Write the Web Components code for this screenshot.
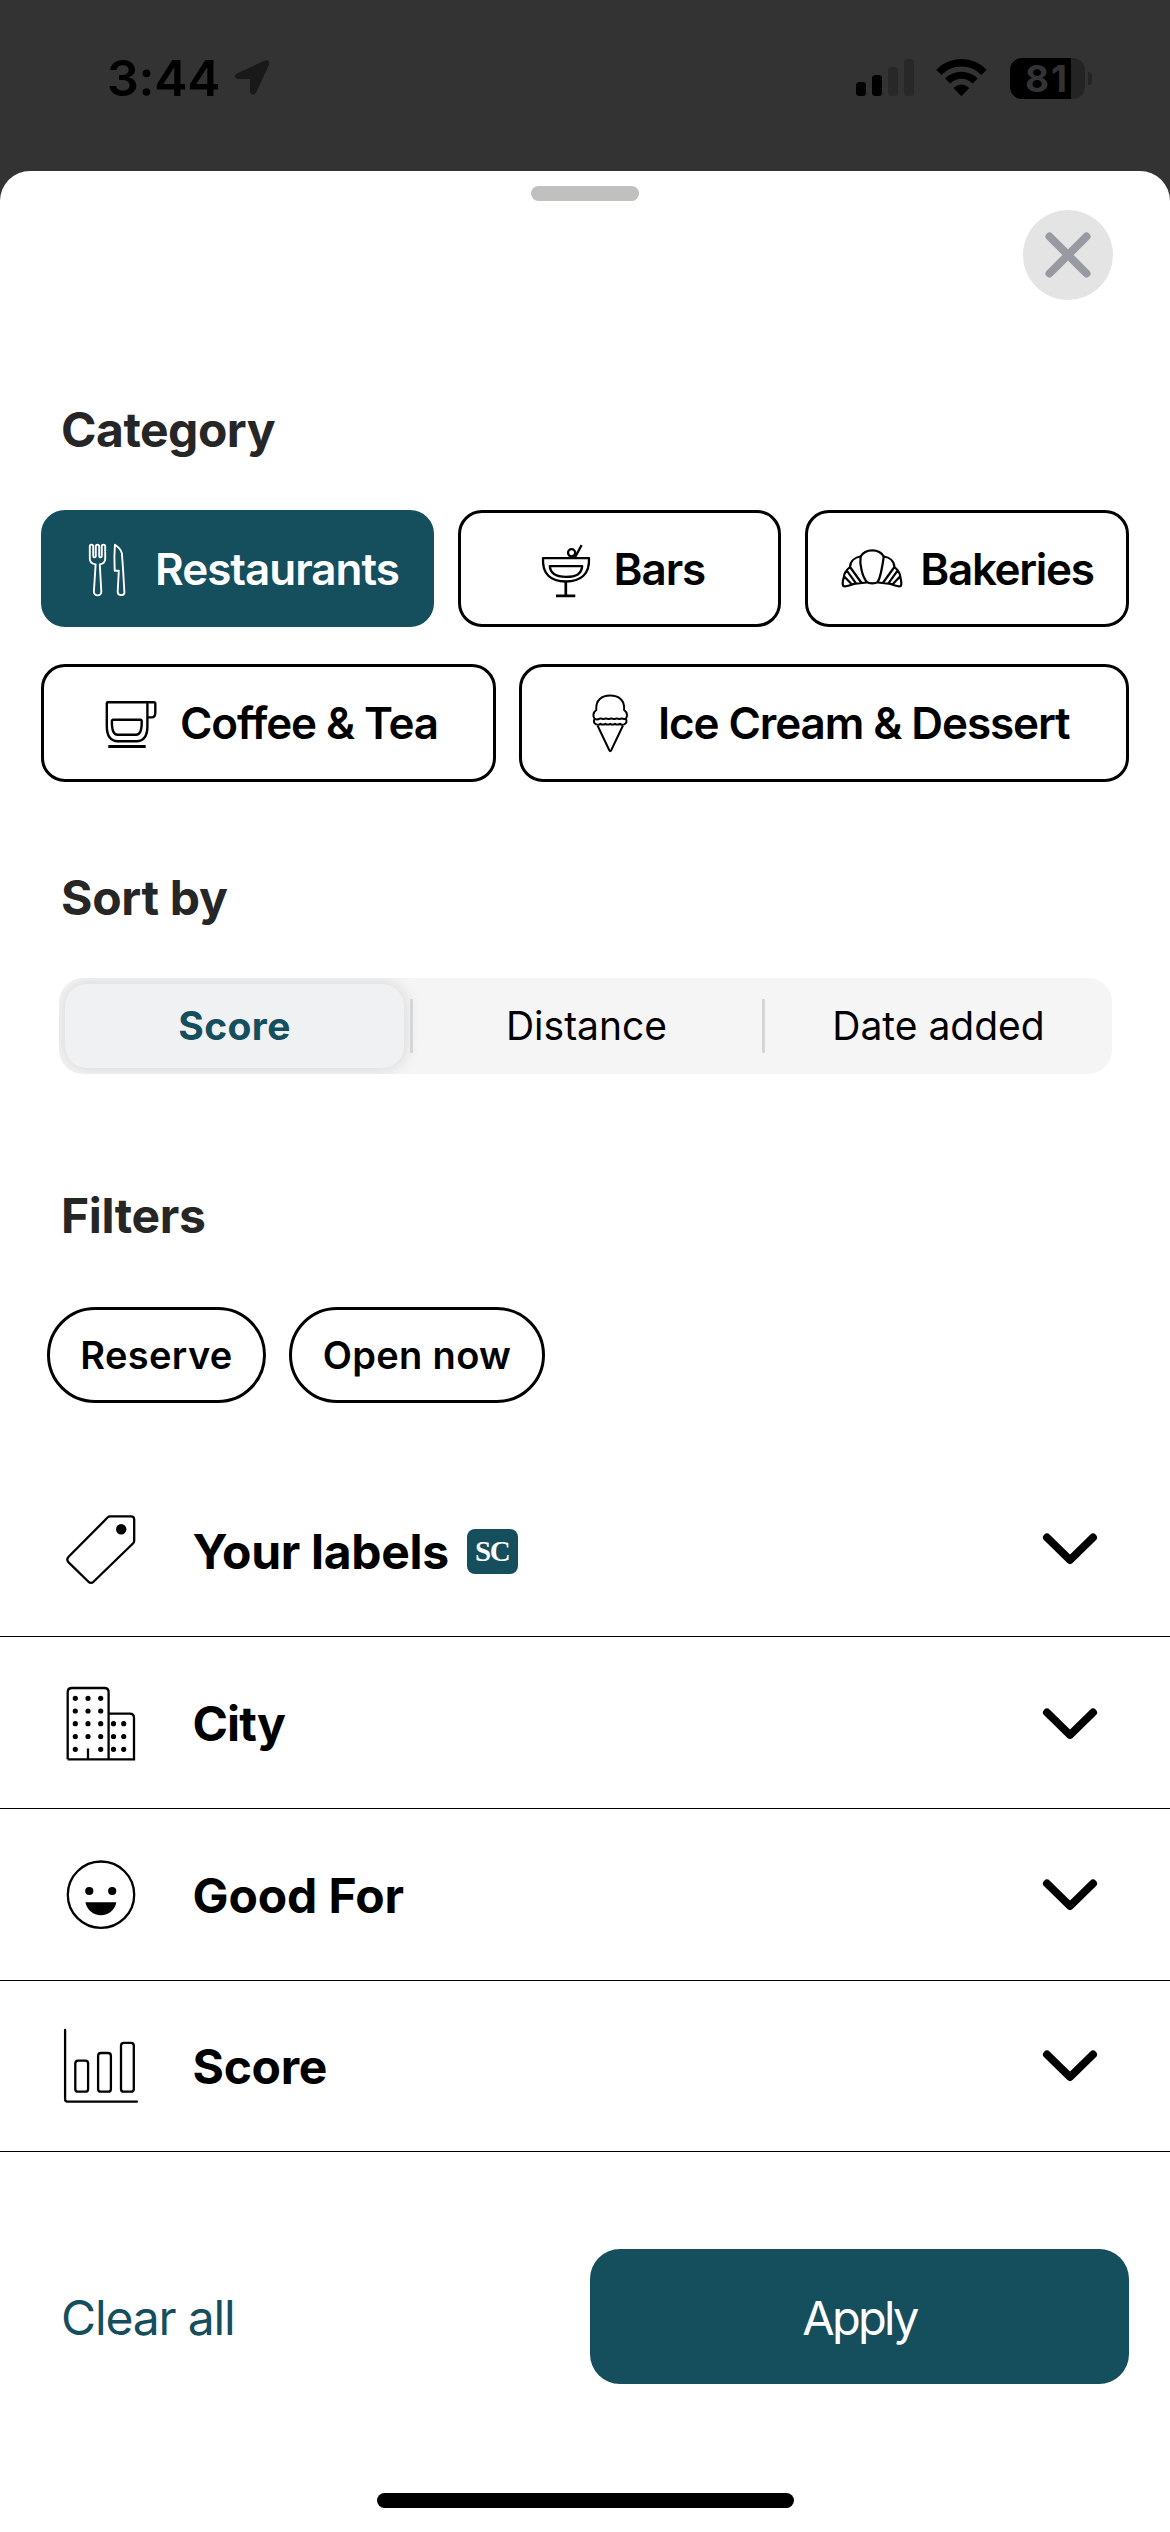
<!DOCTYPE html>
<html lang="en">
<head>
<meta charset="utf-8">
<title>Filters</title>
<style>
html,body{margin:0;padding:0;background:#333}
body{width:1170px;height:2532px;overflow:hidden;font-family:Inter,"Liberation Sans",sans-serif;color:#000}
</style>
</head>
<body>
<filter-screen></filter-screen>
<script>
const define = (name, html) => {
  const tpl = document.createElement('template');
  tpl.innerHTML = html;
  customElements.define(name, class extends HTMLElement {
    constructor() {
      super();
      this.attachShadow({ mode: 'open' }).append(tpl.content.cloneNode(true));
    }
  });
};

define('status-bar', `
<style>
:host{display:flex;height:171px;box-sizing:border-box;padding:48px 78px 0 107px;justify-content:space-between;align-items:flex-start}
.side{display:flex;align-items:center;height:60px}
.time{font-size:50px;font-weight:600;line-height:60px;letter-spacing:-.3px;margin-right:14px}
svg{display:block}
.battery{display:flex;align-items:center;margin-left:23px}
.cell{width:75px;height:41px;border-radius:12px;background:linear-gradient(90deg,#000 61px,#242424 61px);color:#333;font-size:37px;line-height:41px;font-weight:700;letter-spacing:2px;box-sizing:border-box;padding-left:15px}
.tip{width:4px;height:13px;margin-left:3px;border-radius:0 5px 5px 0;background:#242424}
</style>
<div class="side">
  <span class="time">3:44</span>
  <svg width="36" height="38" viewBox="234 60 36 38"><path d="M237 74.6 L264.8 61.5 Q270.6 60 269 65.8 L256.6 92.5 Q255 95.8 252.4 95.4 Q250 95 250 92 V80 H238 Q235.2 79.8 234.8 77.6 Q234.8 75.6 237 74.6Z" fill="#191919"/></svg>
</div>
<div class="side">
  <svg width="131" height="40" viewBox="856 58 131 40">
    <rect x="856" y="82" width="10" height="14" rx="3.5"/><rect x="872" y="75" width="10" height="21" rx="3.5"/>
    <rect x="888" y="67" width="10" height="29" rx="3.5" fill="#282828"/><rect x="904" y="59" width="10" height="37" rx="3.5" fill="#282828"/>
    <path d="M961.4 96.2 L954.2 88.8 Q953.4 88 954.4 87.2 Q961.4 81.6 968.4 87.2 Q969.4 88 968.6 88.8Z"/>
    <g fill="none" stroke="#000"><path d="M938.8 72.3 C951.5 59.6 971.5 59.6 984 72.3" stroke-width="7.4"/><path d="M947.6 81 C955.4 73.3 967.4 73.3 975.2 81" stroke-width="7.2"/></g>
  </svg>
  <div class="battery"><div class="cell">81</div><div class="tip"></div></div>
</div>`);

define('sheet-header', `
<style>
:host{display:flex;flex-direction:column;height:229px}
.handle{width:108px;height:15px;border-radius:8px;background:#c0c0be;align-self:center;margin-top:15px}
.close{width:90px;height:90px;border-radius:50%;background:#e4e4e4;align-self:flex-end;margin:9px 57px 0 0}
svg{display:block}
</style>
<div class="handle"></div>
<div class="close"><svg width="90" height="90" viewBox="0 0 90 90"><path d="M26.5 26.5 63.5 63.5M63.5 26.5 26.5 63.5" stroke="#989aa2" stroke-width="8" stroke-linecap="round"/></svg></div>`);

define('section-title', `
<style>:host{display:block;height:60px;line-height:60px;padding-left:61px;font-size:48px;font-weight:700;color:#262626;letter-spacing:var(--track,-.5px)}</style><slot></slot>`);

define('category-chip', `
<style>
:host{display:flex;align-items:center;box-sizing:border-box;height:118px;border:3px solid #000;border-radius:24px;font-size:44px;font-weight:600;gap:16px;letter-spacing:-1.1px;white-space:nowrap}
:host([selected]){background:#154e5c;border-color:#154e5c;color:#fff;letter-spacing:-1px}
::slotted(svg){display:block;flex:none}
</style>
<slot name="icon"></slot><span><slot></slot></span>`);

define('segment-item', `
<style>
:host{display:flex;align-items:center;justify-content:center;box-sizing:border-box;font-size:39px;line-height:48px}
:host([selected]){background:#eff1f3;color:#154e5c;font-weight:700;letter-spacing:.4px;border-radius:22px;box-shadow:0 0 18px rgba(0,0,0,.14)}
</style><slot></slot>`);

define('segment-control', `
<style>
:host{display:grid;grid-template-columns:339px 13px 339px 13px 339px;height:96px;box-sizing:border-box;padding:6px;margin:0 58px 0 59px;border-radius:24px;background:#f5f5f5;overflow:hidden}
i{width:3px;height:54px;background:#d6d6d6;align-self:center;margin-left:6px}
</style>
<slot name="a"></slot><i></i><slot name="b"></slot><i></i><slot name="c"></slot>`);

define('filter-pill', `
<style>:host{display:flex;align-items:center;justify-content:center;box-sizing:border-box;height:96px;border:3px solid #000;border-radius:48px;font-size:38px;font-weight:600;letter-spacing:.35px}</style><slot></slot>`);

define('accordion-row', `
<style>
:host{display:flex;align-items:center;box-sizing:border-box;height:172px;border-bottom:1px solid #000;padding:0 68px 0 60px}
::slotted(svg){display:block;flex:none}
.label{display:flex;align-items:center;font-size:48px;line-height:60px;font-weight:700;letter-spacing:var(--track,-.3px);margin-left:52.5px;padding-top:2px}
.chev{margin:var(--chev,0) 0 0 auto}
</style>
<slot name="icon"></slot><span class="label"><slot></slot><slot name="badge"></slot></span>
<svg class="chev" width="64" height="40" viewBox="0 0 64 40"><path d="M9 8.5 32 31 55 8.5" fill="none" stroke="#000" stroke-width="8" stroke-linecap="round" stroke-linejoin="round"/></svg>`);

define('sc-badge', `
<style>:host{display:block;box-sizing:border-box;width:51px;height:45px;border-radius:8px;background:#154e5c;color:#fff;font:700 29px/45px "Liberation Serif",serif;padding-left:8px;letter-spacing:-1.2px;margin:-1px 0 0 18px}</style><slot></slot>`);

define('sheet-footer', `
<style>
:host{display:flex;flex-direction:column;align-items:center}
.actions{display:flex;align-items:center;justify-content:space-between;box-sizing:border-box;width:100%;padding:97px 41px 0 61px;font-size:48px}
.clear{color:#154e5c;letter-spacing:-1.15px;padding-top:2px}
.apply{width:539px;height:135px;line-height:138px;border-radius:30px;background:#154e5c;color:#fff;text-align:center;font-size:47px;letter-spacing:-2.7px}
.home{width:417px;height:15px;border-radius:8px;background:#000;margin-top:109px}
</style>
<div class="actions"><span class="clear">Clear all</span><div class="apply">Apply</div></div>
<div class="home"></div>`);

define('filter-screen', `
<style>
:host{display:block}
.sheet{display:flex;flex-direction:column;height:2361px;background:#fff;border-radius:30px 30px 0 0}
.row{display:flex;padding:0 41px}
.cats{margin-top:50px;gap:24px}
.cats category-chip{height:117px}
.cats2{margin-top:37px;gap:23px}
.rest{width:393px;padding-left:31px}.bars{width:324px;padding-left:73px}.bake{width:324px;padding-left:32px;letter-spacing:-1.35px}
.coffee{width:455px;padding-left:56px}.ice{width:610px;padding-left:56px}
.sort{margin-top:86px;--track:-.3px}.seg{margin-top:50px}
.filt{margin-top:112px;--track:-.35px}
.pills{margin:61px 0 62px;padding-left:47px;gap:23px}
.res{width:219px}.open{width:256px}
.labels{--chev:-3px}.city{--track:-.9px;--chev:2px}.good{--track:-.1px;--chev:0px}.score{height:171px;--chev:-1px}
</style>
<status-bar></status-bar>
<div class="sheet">
  <sheet-header></sheet-header>
  <section-title>Category</section-title>
  <div class="row cats">
    <category-chip class="rest" selected>
      <svg slot="icon" width="64" height="64" viewBox="75 536.5 64 64" fill="none" stroke="#fff" stroke-width="1.9" stroke-linejoin="round"><path d="M89.8 558.5V545.8a1.7 1.7 0 0 1 3.4 0V555.6a1.3 1.3 0 0 0 2.6 0V545.8a1.7 1.7 0 0 1 3.4 0V555.6a1.3 1.3 0 0 0 2.6 0V545.8a1.7 1.7 0 0 1 3.4 0V558.5q-.2 4.5-5.4 5.4L101.3 591.2a3.7 3.7 0 0 1-7.4 0L95.6 563.9q-5.6-1-5.8-5.4Z"/><path d="M114.9 544.2Q120.4 547.6 121.8 552.5 122.9 564 124.4 592.4 124.3 594.6 121 594.6 117.8 594.4 117.7 591.5L118.8 570.3H114.7Q114 556.5 114.9 544.2Z"/></svg>Restaurants</category-chip>
    <category-chip class="bars">
      <svg slot="icon" width="64" height="64" viewBox="533 536.5 64 64" fill="none" stroke="#000" stroke-width="2.3" stroke-linejoin="round"><path d="M542 557.7H588C588.8 573.5 580 581 564.8 581 549.5 581 541.2 573.5 542 557.7Z"/><path d="M548.8 565.7H581.2C580.5 573.5 575.5 576.3 564.8 576.3 554 576.3 549.3 573 548.8 565.7Z"/><path d="M564.8 581V595M555 595.3H574.3" stroke-width="2.7"/><circle cx="570.6" cy="552.3" r="3.6"/><path d="M580.6 544.6 573.8 557.3"/></svg>Bars</category-chip>
    <category-chip class="bake">
      <svg slot="icon" width="64" height="64" viewBox="840 536.5 64 64" fill="none" stroke="#000" stroke-width="2.2" stroke-linejoin="round" stroke-linecap="round"><path d="M860.6 556C863 551.8 867.5 549.8 872.2 549.8 877 549.8 881.5 551.8 883.8 556"/><path d="M860.6 556C859.6 563 861.8 575.5 866.6 581.2Q868.3 582.8 872.2 582.8 876.1 582.8 877.8 581.2C880.5 577 882.8 563 883.8 556"/><path d="M860.6 556C855 556.8 850.3 560.5 850 566.5 845.8 570 844 573.5 843.9 576.5 842.6 580.5 842.3 584 843.3 585.5 846 587 850 584.3 855.5 583.2L866.6 582M850 566.5 861.2 582M847 570.3 856 582.8M844.2 576 851.5 583.5"/><path d="M883.8 556C889.4 556.8 894.1 560.5 894.4 566.5 898.6 570 900.2 573.5 900.3 576.5 901.3 580.5 901.8 584 900.8 585.5 898.2 587 894.4 584.3 888.9 583.2L877.8 582M894.4 566.5 883.2 582M897.4 570.3 888.4 582.8M900 576 892.9 583.5"/></svg>Bakeries</category-chip>
  </div>
  <div class="row cats2">
    <category-chip class="coffee">
      <svg slot="icon" width="64" height="64" viewBox="100 691 64 64" fill="none" stroke="#000" stroke-width="2.4" stroke-linejoin="round"><path d="M106.8 703.2Q106.8 702.2 107.8 702.2H153.8Q155.3 702.2 155.3 703.7V712.6Q155.3 717.4 152 717.4H147.7M147.4 702.2V726C147.4 735.5 144 741.2 136.5 741.2H118C110.5 741.2 106.8 735.5 106.8 726V703.2"/><path d="M113.2 719.8H140.4Q141.8 719.8 141.7 721.3 142 734.8 136 734.8H117.6Q111.7 734.8 111.9 721.3 111.8 719.8 113.2 719.8Z"/><path d="M108.3 746.5H145.7" stroke-width="2.8"/></svg>Coffee &amp; Tea</category-chip>
    <category-chip class="ice">
      <svg slot="icon" width="64" height="64" viewBox="578 691 64 64" fill="none" stroke="#000" stroke-width="2" stroke-linejoin="round"><path d="M596.3 710C595.4 700 602 695.6 610.2 695.6 618.4 695.6 625 700 624.1 710 627.8 712.5 627.5 717 625.8 718.6 624 720 622.5 717.8 620.8 718.6 619 719.8 617.5 717.8 615.6 718.6 613.8 719.8 612 717.8 610.2 718.6 608.4 719.8 606.6 717.8 604.8 718.6 603 719.8 601.5 717.8 599.6 718.6 597.8 719.8 596.3 720 594.6 718.6 592.9 717 592.6 712.5 596.3 710Z"/><path d="M594.8 718.6Q592.3 722.5 596.3 724.4 599 725.4 600.5 723.8 603 725.4 605.4 723.8 607.8 725.4 610.2 723.8 612.6 725.4 615 723.8 617.4 725.4 619.9 723.8 621.4 725.4 624.1 724.4 628.1 722.5 625.6 718.6"/><path d="M597.5 725.5 609.3 750.3Q610.3 752 611.2 750.3L623 725.5"/></svg>Ice Cream &amp; Dessert</category-chip>
  </div>
  <section-title class="sort">Sort by</section-title>
  <segment-control class="seg">
    <segment-item slot="a" selected>Score</segment-item>
    <segment-item slot="b">Distance</segment-item>
    <segment-item slot="c">Date added</segment-item>
  </segment-control>
  <section-title class="filt">Filters</section-title>
  <div class="row pills">
    <filter-pill class="res">Reserve</filter-pill>
    <filter-pill class="open">Open now</filter-pill>
  </div>
  <accordion-row class="labels">
    <svg slot="icon" width="80" height="81" viewBox="60 1510 80 81" fill="none" stroke="#000" stroke-width="2.3" stroke-linejoin="round"><path d="M110 1516.3H131Q134.2 1516.3 134.2 1519.5V1540.8Q134.2 1542.2 133.2 1543.2L93.5 1581.8Q91 1584 88.5 1581.8L68.6 1562.4Q66 1559.5 68.6 1556.8L107.8 1517.3Q108.8 1516.3 110 1516.3Z"/><circle cx="121.2" cy="1529.2" r="5.2" fill="#000" stroke="none"/></svg>Your labels<sc-badge slot="badge">SC</sc-badge></accordion-row>
  <accordion-row class="city">
    <svg slot="icon" width="80" height="81" viewBox="60 1682 80 81" fill="none" stroke="#000" stroke-width="2.3"><path d="M67.7 1759.3V1692.3Q67.7 1688 72 1688H104.3Q108.6 1688 108.6 1692.3V1759.3M108.6 1713.7H129.7Q134 1713.7 134 1718V1759.3H67.7M88 1748.5V1759"/><path d="M75.3 1698.3h.01M88 1698.3h.01M100.7 1698.3h.01M75.3 1711h.01M88 1711h.01M100.7 1711h.01M75.3 1723.7h.01M88 1723.7h.01M100.7 1723.7h.01M113.5 1723.7h.01M123.7 1723.7h.01M75.3 1736.5h.01M88 1736.5h.01M100.7 1736.5h.01M113.5 1736.5h.01M123.7 1736.5h.01M75.3 1749.3h.01M100.7 1749.3h.01M113.5 1749.3h.01M123.7 1749.3h.01" stroke-width="5.2" stroke-linecap="round"/></svg>City</accordion-row>
  <accordion-row class="good">
    <svg slot="icon" width="80" height="81" viewBox="60 1854 80 81"><circle cx="101" cy="1894.7" r="33.2" fill="none" stroke="#000" stroke-width="2.3"/><circle cx="89.3" cy="1891" r="4.1"/><circle cx="112.2" cy="1891" r="4.1"/><path d="M85.4 1902.3H116.4C114.5 1910.5 108.5 1915.3 100.9 1915.3 93.3 1915.3 87.3 1910.5 85.4 1902.3Z"/></svg>Good For</accordion-row>
  <accordion-row class="score">
    <svg slot="icon" width="80" height="80" viewBox="60 2026 80 80" fill="none" stroke="#000" stroke-width="2.3" stroke-linecap="round"><path d="M65.1 2030V2099.3Q65.1 2101.6 67.4 2101.6H137"/><rect x="75.3" y="2060.7" width="12.8" height="31" rx="2.8"/><rect x="98.1" y="2053" width="12.8" height="38.7" rx="2.8"/><rect x="121" y="2042.8" width="12.8" height="48.9" rx="2.8"/></svg>Score</accordion-row>
  <sheet-footer></sheet-footer>
</div>`);
</script>
</body>
</html>
